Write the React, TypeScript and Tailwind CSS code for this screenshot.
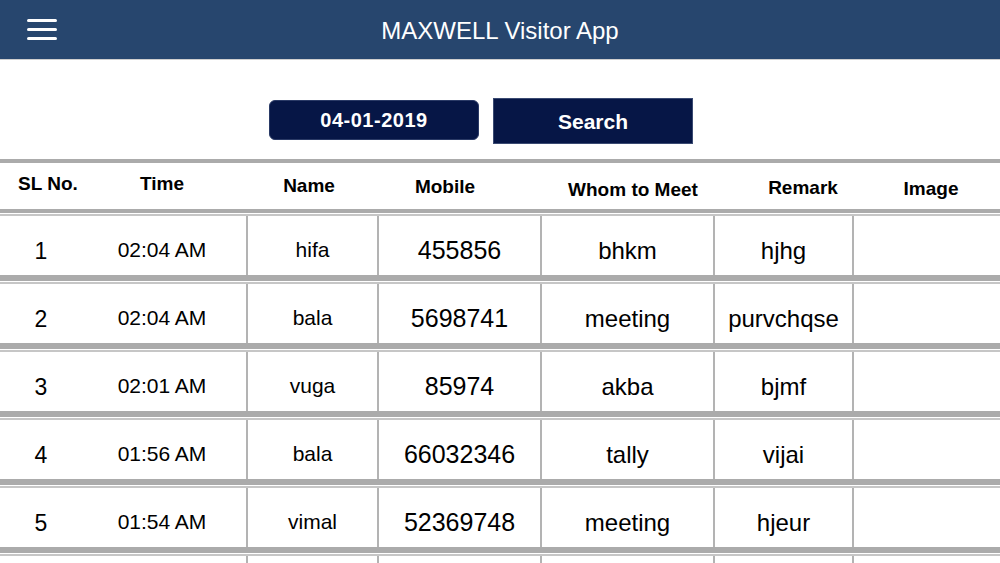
import React from 'react';

interface Visitor {
  sl: number;
  time: string;
  name: string;
  mobile: string;
  whom: string;
  remark: string;
}

const VISITORS: Visitor[] = [
  { sl: 1, time: '02:04 AM', name: 'hifa', mobile: '455856', whom: 'bhkm', remark: 'hjhg' },
  { sl: 2, time: '02:04 AM', name: 'bala', mobile: '5698741', whom: 'meeting', remark: 'purvchqse' },
  { sl: 3, time: '02:01 AM', name: 'vuga', mobile: '85974', whom: 'akba', remark: 'bjmf' },
  { sl: 4, time: '01:56 AM', name: 'bala', mobile: '66032346', whom: 'tally', remark: 'vijai' },
  { sl: 5, time: '01:54 AM', name: 'vimal', mobile: '52369748', whom: 'meeting', remark: 'hjeur' },
  { sl: 6, time: '', name: '', mobile: '', whom: '', remark: '' },
];

function Hamburger() {
  return (
    <button className="flex flex-col gap-[6px] w-[30px]">
      <span className="block h-[3px] w-full bg-white rounded-sm" />
      <span className="block h-[3px] w-full bg-white rounded-sm" />
      <span className="block h-[3px] w-full bg-white rounded-sm" />
    </button>
  );
}

function RowDivider() {
  return (
    <div>
      <div className="h-[6px] bg-[#ababab]" />
      <div className="h-[1px] bg-white" />
      <div className="h-[2px] bg-[#c6c6c6]" />
    </div>
  );
}

export default function App() {
  return (
    <div
      className="w-[1000px] h-[563px] overflow-hidden bg-white text-black"
      style={{ fontFamily: '"Liberation Sans", Arial, sans-serif' }}
    >
      {/* Top bar */}
      <header className="relative h-[60px] bg-[#27466e] border-b border-[#cfcfcf] flex items-center justify-center">
        <div className="absolute left-[27px] top-[19px]">
          <Hamburger />
        </div>
        <h1 className="text-white text-[24px] font-medium pt-[3px]">MAXWELL Visitor App</h1>
      </header>

      {/* Date filter */}
      <div className="flex items-center pl-[269px] pt-[38px] gap-[14px]">
        <div className="w-[210px] h-[40px] rounded-[6px] bg-[#061646] border border-[#2a3a66] flex items-center justify-center text-white text-[20px] font-bold tracking-[0.5px] -mt-[2px]">
          04-01-2019
        </div>
        <button className="w-[200px] h-[46px] bg-[#061646] border border-[#3a4a72] flex items-center justify-center text-white text-[21px] font-bold pt-[2px]">
          Search
        </button>
      </div>

      {/* Table */}
      <div className="mt-[15px]">
        <div className="h-[4px] bg-[#ababab]" />
        <div className="grid grid-cols-[96px_154px_118px_154px_222px_118px_138px] h-[46px] text-[19px] font-bold">
          <div className="flex items-center justify-center pb-[4px]">SL No.</div>
          <div className="flex items-center justify-center pr-[22px] pb-[4px]">Time</div>
          <div className="flex items-center justify-center">Name</div>
          <div className="flex items-center justify-center pt-[2px]">Mobile</div>
          <div className="flex items-center justify-center pt-[8px]">Whom to Meet</div>
          <div className="flex items-center justify-center pt-[4px]">Remark</div>
          <div className="flex items-center justify-center pt-[6px]">Image</div>
        </div>
        <div>
          <div className="h-[4px] bg-[#ababab]" />
          <div className="h-[1px] bg-white" />
          <div className="h-[2px] bg-[#c6c6c6]" />
        </div>

        {VISITORS.map((v) => (
          <div key={v.sl}>
            <div className="grid grid-cols-[248px_131px_163px_173px_139px_146px] h-[59px]">
              <div className="flex items-center border-r-2 border-[#b3b3b3] pt-[12px]">
                <span className="w-[82px] text-center text-[23px]">{v.time ? v.sl : ''}</span>
                <span className="w-[160px] text-center text-[21px] -mt-[4px]">{v.time}</span>
              </div>
              <div className="flex items-center justify-center border-r-2 border-[#b3b3b3] text-[21px] pt-[8px]">
                {v.name}
              </div>
              <div className="flex items-center justify-center border-r-2 border-[#b3b3b3] text-[25px] pt-[10px]">
                {v.mobile}
              </div>
              <div className="flex items-center justify-center border-r-2 border-[#b3b3b3] text-[24px] pt-[10px]">
                {v.whom}
              </div>
              <div className="flex items-center justify-center border-r-2 border-[#b3b3b3] text-[24px] pt-[10px]">
                {v.remark}
              </div>
              <div />
            </div>
            <RowDivider />
          </div>
        ))}
      </div>
    </div>
  );
}
